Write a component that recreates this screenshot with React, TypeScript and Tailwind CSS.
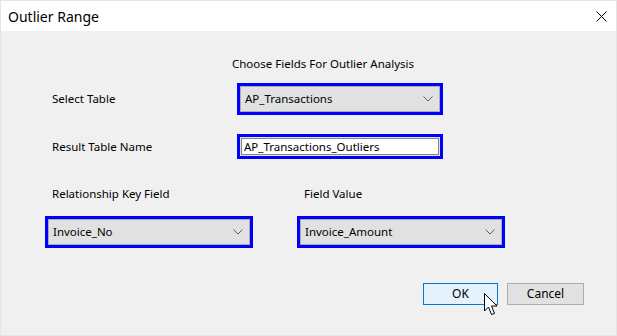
import React from "react";

function Chevron() {
  return (
    <svg width="10" height="6" viewBox="0 0 10 6" className="shrink-0">
      <path d="M0.5 0.5 L5 5 L9.5 0.5" fill="none" stroke="#606060" strokeWidth="1" />
    </svg>
  );
}

function Combo({ value, width }: { value: string; width: string }) {
  return (
    <div className={`${width} h-[32px] border-[3px] border-[#0000ff] flex`}>
      <div className="flex-1 border border-[#adadad] bg-[#e1e1e1] flex items-center justify-between pl-[4px] pr-[6px]">
        <span>{value}</span>
        <Chevron />
      </div>
    </div>
  );
}

function Cursor() {
  return (
    <svg width="15" height="24" viewBox="0 0 15 24" className="absolute left-[483px] top-[292px]">
      <path
        d="M0.5 0.5 L0.5 18 L4.5 14 L7.5 21.5 L10.5 20.5 L7.5 13 L13 13 Z"
        fill="#ffffff"
        stroke="#000000"
        strokeWidth="1"
        strokeLinejoin="miter"
      />
    </svg>
  );
}

export default function App() {
  return (
    <div
      className="relative w-[617px] h-[336px] bg-[#f0f0f0] text-[11.5px] text-black border border-[#e5e5e5] overflow-hidden"
      style={{ fontFamily: '"Noto Sans", "Liberation Sans", sans-serif' }}
    >
      <div className="h-[30px] bg-white flex items-center justify-between pl-[7px] pr-[9px]">
        <span className="text-[14px]">Outlier Range</span>
        <svg width="11" height="11" viewBox="0 0 11 11">
          <path d="M0.5 0.5 L10.5 10.5 M10.5 0.5 L0.5 10.5" stroke="#000" strokeWidth="1" />
        </svg>
      </div>

      <div className="pl-[231px] pt-[24px] h-[52px]">Choose Fields For Outlier Analysis</div>

      <div className="flex items-center h-[32px]">
        <span className="w-[236px] pl-[51px]">Select Table</span>
        <Combo value="AP_Transactions" width="w-[206px]" />
      </div>

      <div className="flex items-center h-[25px] mt-[19px]">
        <span className="w-[236px] pl-[51px]">Result Table Name</span>
        <div className="w-[206px] h-[25px] border-[3px] border-[#0000ff] flex">
          <div className="flex-1 p-px bg-[#e3e3e3] flex">
            <div className="flex-1 border border-[#828790] bg-white flex items-center pl-[2px] leading-none">
              AP_Transactions_Outliers
            </div>
          </div>
        </div>
      </div>

      <div className="flex h-[20px] mt-[25px] items-center">
        <span className="w-[303px] pl-[51px]">Relationship Key Field</span>
        <span>Field Value</span>
      </div>

      <div className="flex mt-[12px] pl-[44px] gap-[44px]">
        <Combo value="Invoice_No" width="w-[208px]" />
        <Combo value="Invoice_Amount" width="w-[208px]" />
      </div>

      <div className="flex justify-end gap-[9px] pr-[32px] mt-[35px]">
        <button className="w-[75px] h-[22px] bg-[#e5f1fb] border border-[#0078d7] text-[12px]">OK</button>
        <button className="w-[77px] h-[22px] bg-[#e1e1e1] border border-[#adadad] text-[12px]">Cancel</button>
      </div>

      <Cursor />
    </div>
  );
}
